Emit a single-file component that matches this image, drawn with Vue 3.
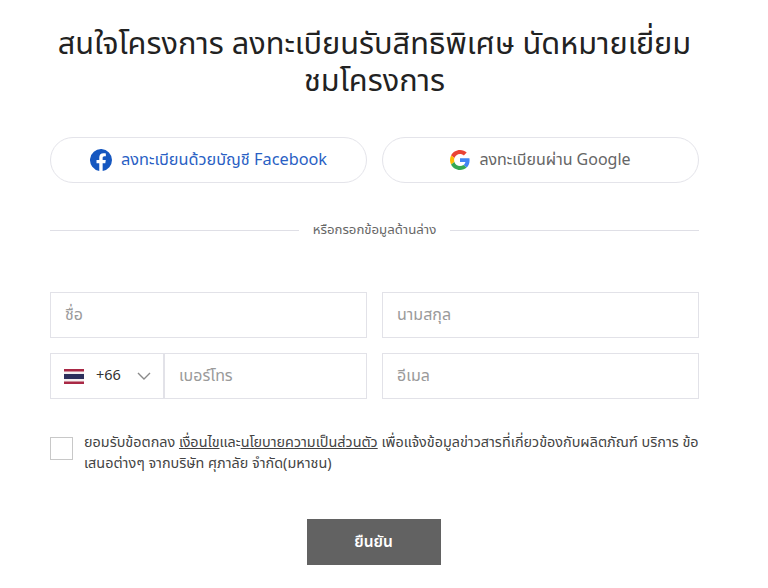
<script setup>
</script>

<template>
  <div class="page">
    <h1 class="title">สนใจโครงการ ลงทะเบียนรับสิทธิพิเศษ นัดหมายเยี่ยม<br />ชมโครงการ</h1>

    <div class="row social">
      <button class="pill fb" type="button">
        <svg width="22" height="22" viewBox="0 0 24 24">
          <path fill="#1557c0" d="M24 12a12 12 0 1 0-13.900 11.900v-8.400H7.100V12h3V9.400c0-3 1.800-4.700 4.500-4.700 1.300 0 2.700.2 2.700.2v3h-1.500c-1.500 0-2 .9-2 1.900V12h3.400l-.5 3.500h-2.900v8.400A12 12 0 0 0 24 12z"/>
        </svg>
        <span>ลงทะเบียนด้วยบัญชี Facebook</span>
      </button>
      <button class="pill gg" type="button">
        <svg width="20" height="20" viewBox="0 0 48 48">
          <path fill="#EA4335" d="M24 9.500c3.500 0 6.700 1.200 9.200 3.600l6.900-6.900C35.900 2.400 30.500 0 24 0 14.600 0 6.500 5.400 2.600 13.200l8 6.200C12.500 13.600 17.800 9.500 24 9.500z"/>
          <path fill="#4285F4" d="M47 24.500c0-1.600-.1-3.100-.4-4.500H24v9h12.900c-.6 3-2.200 5.500-4.700 7.200l7.700 6C44.400 38 47 31.800 47 24.500z"/>
          <path fill="#FBBC05" d="M10.600 28.600c-.5-1.400-.8-3-.8-4.600s.3-3.200.8-4.600l-8-6.200C.9 16.500 0 20.100 0 24s.9 7.500 2.600 10.800l8-6.200z"/>
          <path fill="#34A853" d="M24 48c6.500 0 11.900-2.100 15.900-5.800l-7.700-6c-2.200 1.400-4.900 2.300-8.200 2.300-6.200 0-11.500-4.100-13.400-9.900l-8 6.200C6.500 42.600 14.600 48 24 48z"/>
        </svg>
        <span>ลงทะเบียนผ่าน Google</span>
      </button>
    </div>

    <div class="divider">
      <span class="line"></span>
      <span class="divider-text">หรือกรอกข้อมูลด้านล่าง</span>
      <span class="line"></span>
    </div>

    <div class="row fields">
      <input class="field" placeholder="ชื่อ" />
      <input class="field" placeholder="นามสกุล" />
    </div>

    <div class="row fields second">
      <div class="phone">
        <div class="code">
          <svg class="flag" width="20" height="15" viewBox="0 0 20 15">
            <rect width="20" height="15" fill="#f4f0f0"/>
            <rect width="20" height="2.500" fill="#a92845"/>
            <rect y="5" width="20" height="5" fill="#2c2f5b"/>
            <rect y="12.500" width="20" height="2.500" fill="#a92845"/>
          </svg>
          <span class="dial">+66</span>
          <svg class="chev" width="14" height="8" viewBox="0 0 14 8">
            <path d="M1 1l6 6 6-6" fill="none" stroke="#8a8a8a" stroke-width="1.400"/>
          </svg>
        </div>
        <input class="field tel" placeholder="เบอร์โทร" />
      </div>
      <input class="field" placeholder="อีเมล" />
    </div>

    <div class="consent">
      <span class="box"></span>
      <p class="consent-text">ยอมรับข้อตกลง <a>เงื่อนไข</a>และ<a>นโยบายความเป็นส่วนตัว</a> เพื่อแจ้งข้อมูลข่าวสารที่เกี่ยวข้องกับผลิตภัณฑ์ บริการ ข้อ<br />เสนอต่างๆ จากบริษัท ศุภาลัย จำกัด(มหาชน)</p>
    </div>

    <div class="actions">
      <button class="submit" type="button">ยืนยัน</button>
    </div>
  </div>
</template>

<style>
html, body { margin: 0; background: #fff; }
</style>

<style scoped>
.page {
  box-sizing: border-box;
  width: 768px;
  height: 588px;
  padding: 26px 69px 0 50px;
  overflow: hidden;
  font-family: "Noto Sans Thai", "Inter", "Noto Sans", sans-serif;
  color: #333;
}
.title {
  margin: 0 -5px;
  font-size: 30.700px;
  line-height: 37px;
  font-weight: 400;
  color: #222;
  text-align: center;
}
.row { display: grid; grid-template-columns: 317px 317px; gap: 15px; }
.social { margin-top: 37px; }
.pill {
  height: 46px;
  box-sizing: border-box;
  border: 1px solid #e4e4ea;
  border-radius: 23px;
  background: #fff;
  display: flex;
  align-items: center;
  justify-content: center;
  gap: 9px;
  font: inherit;
  font-size: 16px;
}
.fb { color: #2a5fc4; font-size: 16.300px; }
.gg { color: #666; }
.divider { display: flex; align-items: center; gap: 14px; margin-top: 36px; height: 22px; }
.line { flex: 1; height: 1px; background: #dfdfe6; }
.divider-text { font-size: 13.200px; color: #666; }
.fields { margin-top: 51px; }
.second { margin-top: 15px; }
.field {
  box-sizing: border-box;
  width: 100%;
  height: 46px;
  border: 1px solid #e2e2e8;
  padding: 0 14px;
  font: inherit;
  font-size: 16px;
  outline: none;
  background: #fff;
}
.field::placeholder { color: #9a9a9a; opacity: 1; }
.phone { display: flex; height: 46px; }
.code {
  box-sizing: border-box;
  width: 115px;
  flex: none;
  display: flex;
  align-items: center;
  border: 1px solid #e2e2e8;
  border-right: 2px solid #e2e2e8;
  padding-left: 13px;
}
.dial { margin-left: 12px; font-size: 14.500px; color: #333; }
.chev { margin-left: 16px; }
.tel { border-left: 0; flex: 1; min-width: 0; }
.consent { display: flex; gap: 11px; margin-top: 33px; }
.box {
  flex: none;
  box-sizing: border-box;
  width: 23px;
  height: 23px;
  margin-top: 5px;
  border: 1px solid #c8c8c8;
}
.consent-text {
  margin: 0;
  font-size: 14.400px;
  line-height: 21px;
  color: #444;
  white-space: nowrap;
}
.consent-text a { text-decoration: underline; }
.actions { display: flex; justify-content: center; margin-top: 45px; padding-right: 2px; }
.submit {
  width: 134px;
  height: 46px;
  border: 0;
  background: #626262;
  color: #fff;
  font: inherit;
  font-size: 15.500px;
  font-weight: 600;
}
</style>
